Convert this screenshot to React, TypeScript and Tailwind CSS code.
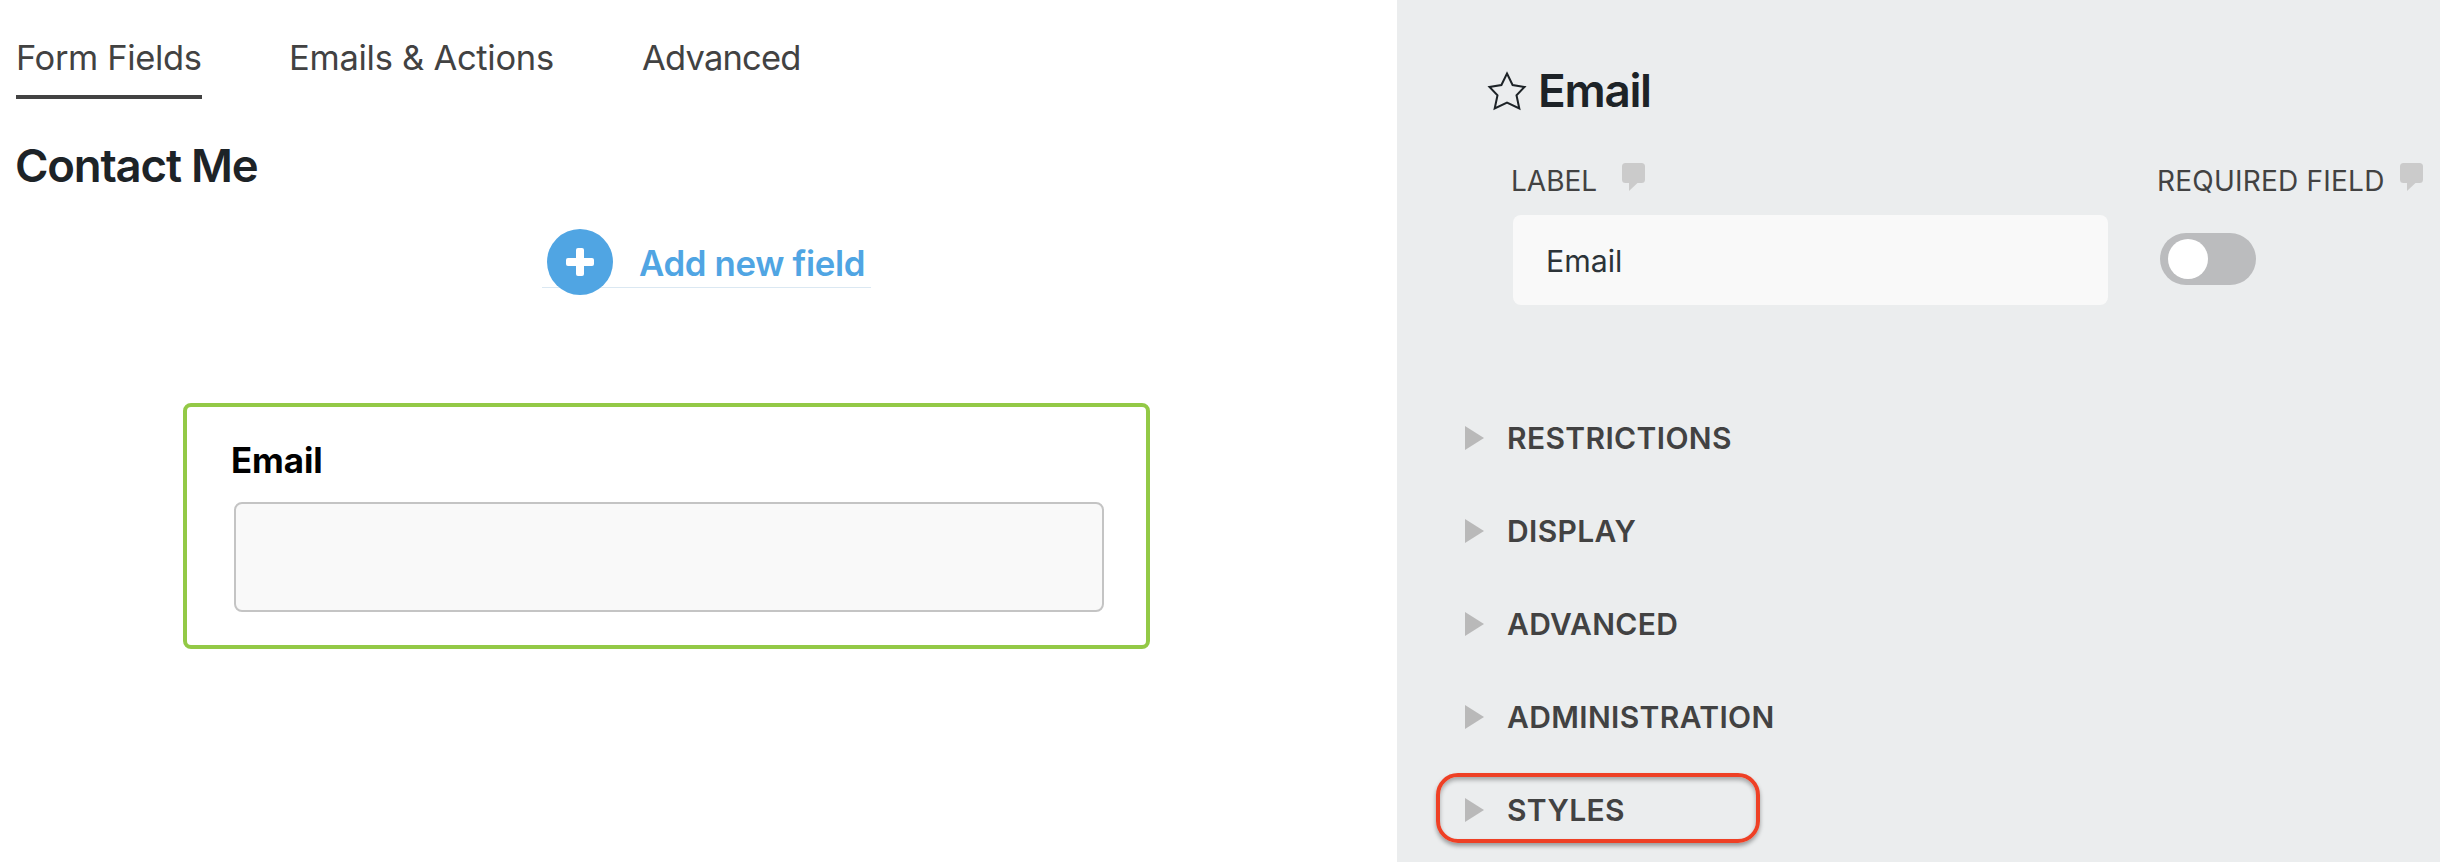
import { clsx } from "clsx";

const tabs = [
  { label: "Form Fields", active: true, className: "w-[186px] tracking-[-0.011em]" },
  { label: "Emails & Actions", active: false, className: "w-[266px] tracking-[-0.008em]" },
  { label: "Advanced", active: false, className: "w-[162px] tracking-[-0.023em]" },
];

const sections = [
  { label: "RESTRICTIONS", highlighted: false },
  { label: "DISPLAY", highlighted: false },
  { label: "ADVANCED", highlighted: false },
  { label: "ADMINISTRATION", highlighted: false },
  { label: "STYLES", highlighted: true },
];

function HelpBubble({ className }: { className?: string }) {
  return (
    <svg className={clsx("shrink-0", className)} width="23" height="28" viewBox="0 0 23 28" fill="#cbcbcb">
      <path d="M3.500 0h16a3.500 3.500 0 0 1 3.500 3.500v13a3.500 3.500 0 0 1-3.500 3.500h-4l-8.500 8v-8H3.500a3.500 3.500 0 0 1-3.500-3.500V3.500a3.500 3.500 0 0 1 3.500-3.500z" />
    </svg>
  );
}

function StarIcon() {
  return (
    <svg className="shrink-0" width="40" height="40" viewBox="0 0 40 40" fill="none" stroke="#1d2327" strokeWidth="2">
      <path d="M20 2.500L25.600 14L37.500 15.900L29.500 24.300L32.300 37.500L20 31.500L7.700 37.500L10.500 24.300L2.500 15.900L14.400 14Z" />
    </svg>
  );
}

function BuilderPane() {
  return (
    <main className="w-[1397px] shrink-0 bg-white">
      <nav className="flex gap-[87px] pl-4 pt-[31px]">
        {tabs.map((tab) => (
          <button
            key={tab.label}
            className={clsx(
              "h-[68px] border-b-4 pb-[11px] text-left text-[34.5px] leading-[53px] whitespace-nowrap text-[#424242]",
              tab.active ? "border-[#424242]" : "border-transparent",
              tab.className
            )}
          >
            {tab.label}
          </button>
        ))}
      </nav>

      <h1 className="mt-[37px] pl-[15px] text-[45.5px] leading-[60px] font-semibold tracking-[-0.026em] text-[#1d2327]">
        Contact Me
      </h1>

      <div className="mt-[33px] ml-[542px] flex h-[66px] w-[329px] items-center bg-[linear-gradient(#dbe8f2,#dbe8f2)] bg-[length:100%_1px] bg-[position:0_58px] bg-no-repeat pl-[5px]">
        <span className="flex size-[66px] shrink-0 items-center justify-center rounded-full bg-[#50a5e3]">
          <svg width="28" height="28" viewBox="0 0 28 28" fill="#fff">
            <rect x="10" y="0" width="8" height="28" rx="2" />
            <rect x="0" y="10" width="28" height="8" rx="2" />
          </svg>
        </span>
        <span className="ml-[26px] pt-[3px] text-[34.8px] leading-[63px] font-semibold tracking-[-0.01em] whitespace-nowrap text-[#50a5e3]">
          Add new field
        </span>
      </div>

      <section className="mt-[108px] ml-[183px] h-[246px] w-[967px] rounded-lg border-4 border-[#93c946] pt-[33px] pl-[47px]">
        <label className="-ml-[3px] block text-[34.8px] leading-[40px] font-bold tracking-[-0.002em] text-black">
          Email
        </label>
        <div className="mt-[22px] h-[110px] w-[870px] rounded-lg border-2 border-[#c4c4c4] bg-[#f9f9f9]" />
      </section>
    </main>
  );
}

function SettingsPane() {
  return (
    <aside className="flex-1 bg-[#ebedee]">
      <div className="flex items-center gap-[11px] pt-[60px] pl-[90px]">
        <StarIcon />
        <h2 className="text-[45.8px] leading-[61px] font-semibold tracking-[-0.028em] text-[#1d2327]">Email</h2>
      </div>

      <div className="mt-[42px] flex pl-[116px]">
        <div className="w-[595px]">
          <div className="flex h-[52px]">
            <span className="-ml-[2px] w-[111px] text-[28px] leading-[36px] text-[#424242]">LABEL</span>
            <HelpBubble />
          </div>
          <div className="h-[90px] rounded-lg bg-[#f9f9f9] pl-[33px] text-[30.3px] leading-[92px] text-[#2c3338]">
            Email
          </div>
        </div>
        <div className="ml-[49px]">
          <div className="flex h-[70px]">
            <span className="w-[243px] text-[28px] leading-[36px] tracking-[0.008em] whitespace-nowrap text-[#424242]">
              REQUIRED FIELD
            </span>
            <HelpBubble />
          </div>
          <button className="ml-[3px] flex h-[52px] w-24 items-center rounded-full bg-[#bbbcbe] pl-2">
            <span className="size-10 rounded-full bg-white" />
          </button>
        </div>
      </div>

      <ul className="mt-[96px] flex flex-col gap-[23px] pl-[39px]">
        {sections.map((section) => (
          <li
            key={section.label}
            className={clsx(
              "flex h-[70px] w-[324px] items-center rounded-[22px] border-4 pt-1 pl-[25px]",
              section.highlighted
                ? "border-[#ee4025] shadow-[0_3px_4px_rgba(0,0,0,0.35),inset_0_3px_4px_rgba(0,0,0,0.3)]"
                : "border-transparent"
            )}
          >
            <svg className="shrink-0" width="19" height="24" viewBox="0 0 19 24" fill="#b9b9b9">
              <path d="M0 0L19 12L0 24Z" />
            </svg>
            <span className="ml-[23px] text-[30px] leading-[62px] font-semibold tracking-[0.012em] whitespace-nowrap text-[#424242]">
              {section.label}
            </span>
          </li>
        ))}
      </ul>
    </aside>
  );
}

export default function App() {
  return (
    <div className="flex h-[862px] w-[2440px] overflow-hidden font-['Inter','Liberation_Sans',sans-serif]">
      <BuilderPane />
      <SettingsPane />
    </div>
  );
}
